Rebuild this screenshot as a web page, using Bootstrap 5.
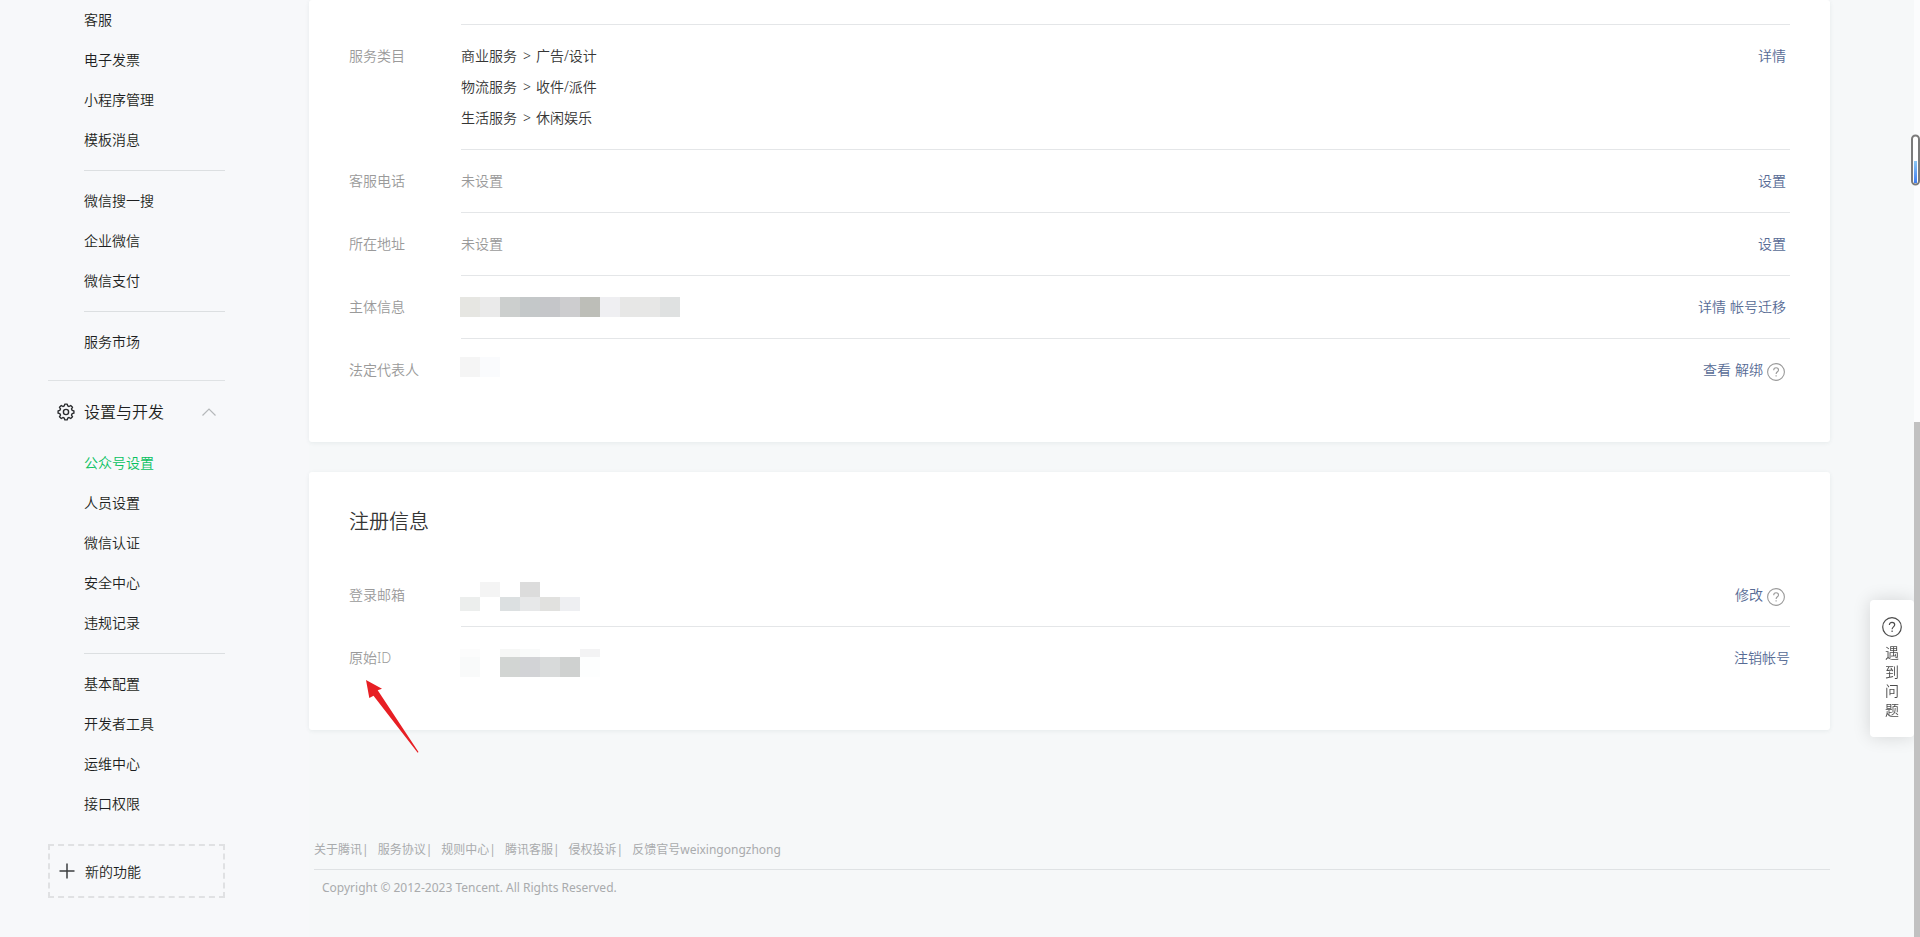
<!DOCTYPE html>
<html lang="zh-CN">
<head>
<meta charset="utf-8">
<meta name="viewport" content="width=device-width, initial-scale=1">
<title>公众号设置</title>
<link href="https://cdn.jsdelivr.net/npm/bootstrap@5.3.0/dist/css/bootstrap.min.css" rel="stylesheet">
<style>
  body { background: #f6f8f9; color: #353535; font: 350 14px/31px "Noto Sans", "Noto Sans CJK SC", sans-serif; overflow: hidden; }
  a { text-decoration: none; }
  button { font-weight: inherit; }
  .side { width: 309px; padding-left: 48px; padding-right: 84px; background: #f7f8fa; }
  .side .nav-link { color: #1d1f21; padding: 0; line-height: 40px; font-weight: inherit; }
  .side .nav-link.active { color: #07c160; }
  .side hr { margin: 10px 0; border-color: #dcdfe1; opacity: 1; }
  .side-list { padding-left: 36px; }
  .side-head { height: 63px; margin-top: 18px; border: 0; border-top: 1px solid #dfe2e4; background: none; color: #1d1f21; font-size: 16px; padding: 0 9px 0 8px; }
  .side-new { height: 54px; margin-top: 20px; border: 2px dashed #e0e1e3; background: none; color: #1d1f21; padding: 0 9px; gap: 10px; }
  .content { padding-right: 90px; }
  .panel { background: #fff; padding: 0 40px 40px; border-radius: 3px; box-shadow: 0 1px 4px rgba(40, 80, 80, .08); margin-bottom: 30px; }
  .panel h2 { font-size: 20px; line-height: 28px; font-weight: inherit; padding-top: 36px; margin: 0 0 28px; color: #353535; }
  .cut-row { height: 25px; }
  .cut-row, .info-main { border-bottom: 1px solid #e4e6e8; }
  .cut-row { margin-left: 112px; }
  .info-label { width: 112px; padding-top: 15px; color: #9a9a9a; font-weight: inherit; }
  .info-main { padding: 15px 0 16px; }
  .info-row:last-child .info-main { border-color: transparent; }
  .info-main dd { color: #353535; }
  .info-main .unset { color: #9a9a9a; }
  .info-main .sep { margin: 0 5px 0 6px; }
  .ops { color: #576b95; padding-right: 4px; gap: 4px; }
  .ops.flush { padding-right: 0; }
  .ops a { color: #576b95; }
  .tip { border: 0; padding: 0; background: none; color: #9a9a9a; line-height: 1; margin: 4px 1px 0 0; }
  .mosaic { overflow: visible; }
  .arrow-mark { left: 17px; top: 53px; }
  .foot { margin-left: 5px; margin-top: 104px; color: #a9abad; font-size: 12px; line-height: 32px; font-weight: 400; }
  .foot a { color: #a9abad; }
  .foot-links { border-bottom: 1px solid #dfe2e4; padding-bottom: 3px; gap: 9px; }
  .foot-links li:not(:last-child)::after { content: "|"; }
  .foot p { padding: 2px 8px; }
  .help { right: 6px; top: 600px; width: 44px; height: 137px; padding: 17px 15px 0; border: 0; border-radius: 4px; background: #fff; color: #4c4c4c; line-height: 19px; box-shadow: 0 0 18px rgba(0, 0, 0, .14); }
  .help svg { margin: 0 -3px 6px; }
  .track { top: 0; right: 0; width: 6px; height: 100%; background: #fbfcfd; padding-top: 422px; }
  .track div { background: #c1c1c1; height: 100%; }
  .gauge { top: 134px; right: 0; }
</style>
</head>
<body>
<div class="d-flex">
  <aside class="side flex-shrink-0 min-vh-100">
    <nav class="nav flex-column flex-nowrap side-list">
      <a class="nav-link" href="#">客服</a>
      <a class="nav-link" href="#">电子发票</a>
      <a class="nav-link" href="#">小程序管理</a>
      <a class="nav-link" href="#">模板消息</a>
      <hr>
      <a class="nav-link" href="#">微信搜一搜</a>
      <a class="nav-link" href="#">企业微信</a>
      <a class="nav-link" href="#">微信支付</a>
      <hr>
      <a class="nav-link" href="#">服务市场</a>
    </nav>
    <button type="button" class="side-head d-flex align-items-center w-100">
      <svg class="me-2" width="20" height="20" viewBox="-10 -10 20 20" fill="none" stroke="#2b2d2f" stroke-width="1.4" stroke-linejoin="round" aria-hidden="true">
        <path d="M7.900 1.200L6.100 1.700 5.500 3.100 6.500 4.700 4.700 6.500 3.100 5.500 1.700 6.100 1.200 7.900H-1.200L-1.700 6.100-3.100 5.500-4.700 6.500-6.500 4.700-5.500 3.100-6.100 1.700-7.900 1.200V-1.200L-6.100-1.700-5.500-3.100-6.500-4.700-4.700-6.500-3.100-5.500-1.700-6.100-1.200-7.900H1.200L1.700-6.100 3.100-5.500 4.700-6.500 6.500-4.700 5.500-3.100 6.100-1.700 7.900-1.200z"/>
        <circle r="2.600"/>
      </svg>
      <span>设置与开发</span>
      <svg class="ms-auto" width="14" height="9" viewBox="0 0 14 9" fill="none" stroke="#b5b8ba" stroke-width="1.200" aria-hidden="true"><path d="M.5 7.500L7 1l6.500 6.500"/></svg>
    </button>
    <nav class="nav flex-column flex-nowrap side-list">
      <a class="nav-link active" href="#">公众号设置</a>
      <a class="nav-link" href="#">人员设置</a>
      <a class="nav-link" href="#">微信认证</a>
      <a class="nav-link" href="#">安全中心</a>
      <a class="nav-link" href="#">违规记录</a>
      <hr>
      <a class="nav-link" href="#">基本配置</a>
      <a class="nav-link" href="#">开发者工具</a>
      <a class="nav-link" href="#">运维中心</a>
      <a class="nav-link" href="#">接口权限</a>
    </nav>
    <button type="button" class="side-new d-flex align-items-center w-100">
      <svg width="16" height="16" viewBox="0 0 16 16" stroke="#3c3e40" stroke-width="1.500" aria-hidden="true"><path d="M8 .5v15M.5 8h15"/></svg>
      <span>新的功能</span>
    </button>
  </aside>

  <main class="content flex-grow-1">
    <section class="panel">
      <div class="cut-row"></div>
      <dl class="m-0">
        <div class="info-row d-flex">
          <dt class="info-label">服务类目</dt>
          <div class="info-main flex-grow-1 d-flex">
            <dd class="m-0 flex-grow-1">商业服务<span class="sep">&gt;</span>广告/设计<br>物流服务<span class="sep">&gt;</span>收件/派件<br>生活服务<span class="sep">&gt;</span>休闲娱乐</dd>
            <div class="ops"><a href="#">详情</a></div>
          </div>
        </div>
        <div class="info-row d-flex">
          <dt class="info-label">客服电话</dt>
          <div class="info-main flex-grow-1 d-flex">
            <dd class="m-0 flex-grow-1 unset">未设置</dd>
            <div class="ops"><a href="#">设置</a></div>
          </div>
        </div>
        <div class="info-row d-flex">
          <dt class="info-label">所在地址</dt>
          <div class="info-main flex-grow-1 d-flex">
            <dd class="m-0 flex-grow-1 unset">未设置</dd>
            <div class="ops"><a href="#">设置</a></div>
          </div>
        </div>
        <div class="info-row d-flex">
          <dt class="info-label">主体信息</dt>
          <div class="info-main flex-grow-1 d-flex">
            <dd class="m-0 flex-grow-1">
              <svg class="mosaic d-block" width="220" height="31" viewBox="1 -1 220 31" shape-rendering="crispEdges" aria-hidden="true">
                <path fill="#e6e6e2" d="M0 5h20v20H0z"/><path fill="#eaeaea" d="M20 5h20v20H20z"/><path fill="#cccfce" d="M40 5h20v20H40z"/><path fill="#c4c8c9" d="M60 5h20v20H60z"/><path fill="#c5c6c9" d="M80 5h20v20H80z"/><path fill="#cdcdcf" d="M100 5h20v20h-20z"/><path fill="#bdbeb8" d="M120 5h20v20h-20z"/><path fill="#efeff2" d="M140 5h20v20h-20z"/><path fill="#e7e7e6" d="M160 5h40v20h-40z"/><path fill="#dfe1e1" d="M200 5h20v20h-20z"/>
              </svg>
            </dd>
            <div class="ops d-flex"><a href="#">详情</a><a href="#">帐号迁移</a></div>
          </div>
        </div>
        <div class="info-row d-flex">
          <dt class="info-label">法定代表人</dt>
          <div class="info-main flex-grow-1 d-flex">
            <dd class="m-0 flex-grow-1">
              <svg class="mosaic d-block" width="40" height="31" viewBox="1 -1 40 31" shape-rendering="crispEdges" aria-hidden="true"><path fill="#f5f5f5" d="M0 2h20v20H0z"/><path fill="#fafbfd" d="M20 2h20v20H20z"/></svg>
            </dd>
            <div class="ops d-flex align-items-center"><a href="#">查看</a><a href="#">解绑</a>
              <button type="button" class="tip" aria-label="帮助"><svg class="d-block" width="18" height="18" viewBox="0 0 18 18" fill="none" stroke="currentColor" stroke-width="1.100"><circle cx="9" cy="9" r="8.400"/><path d="M6.700 7.200C6.700 5.700 7.700 4.700 9.100 4.700s2.400.9 2.400 2.200c0 1.900-2.400 1.900-2.400 4.100M9.100 12.200v1.400"/></svg></button>
            </div>
          </div>
        </div>
      </dl>
    </section>

    <section class="panel">
      <h2>注册信息</h2>
      <dl class="m-0">
        <div class="info-row d-flex">
          <dt class="info-label">登录邮箱</dt>
          <div class="info-main flex-grow-1 d-flex">
            <dd class="m-0 flex-grow-1">
              <svg class="mosaic d-block" width="120" height="31" viewBox="1 -1 120 31" shape-rendering="crispEdges" aria-hidden="true">
                <path fill="#f4f4f4" d="M20 2h20v15H20z"/><path fill="#dcdcdc" d="M60 2h20v15H60z"/><path fill="#eceeed" d="M0 17h20v14H0z"/><path fill="#dce0e1" d="M40 17h20v14H40z"/><path fill="#e7e8e9" d="M60 17h20v14H60z"/><path fill="#e1e1df" d="M80 17h20v14H80z"/><path fill="#eeeff2" d="M100 17h20v14h-20z"/>
              </svg>
            </dd>
            <div class="ops d-flex align-items-center"><a href="#">修改</a>
              <button type="button" class="tip" aria-label="帮助"><svg class="d-block" width="18" height="18" viewBox="0 0 18 18" fill="none" stroke="currentColor" stroke-width="1.100"><circle cx="9" cy="9" r="8.400"/><path d="M6.700 7.200C6.700 5.700 7.700 4.700 9.100 4.700s2.400.9 2.400 2.200c0 1.900-2.400 1.900-2.400 4.100M9.100 12.200v1.400"/></svg></button>
            </div>
          </div>
        </div>
        <div class="info-row d-flex">
          <dt class="info-label position-relative">原始ID
            <svg class="arrow-mark position-absolute" width="53" height="73" viewBox="0 0 53 73" fill="#e71f24" aria-hidden="true"><path d="M0 0l16 8.700-4.300 1.600L52.500 72l-.8.700L7.500 15.700 3.300 18z"/></svg>
          </dt>
          <div class="info-main flex-grow-1 d-flex">
            <dd class="m-0 flex-grow-1">
              <svg class="mosaic d-block" width="140" height="31" viewBox="1 -1 140 31" shape-rendering="crispEdges" aria-hidden="true">
                <path fill="#fcfcfc" d="M0 6h20v8H0z"/><path fill="#f9fafa" d="M0 14h20v20H0z"/><path fill="#f6f7f6" d="M40 6h20v8H40z"/><path fill="#f9fafa" d="M60 6h20v8H60z"/><path fill="#f3f3f4" d="M120 6h20v8h-20z"/><path fill="#d2d5d3" d="M40 14h20v20H40z"/><path fill="#d2d3d6" d="M60 14h20v20H60z"/><path fill="#d8dada" d="M80 14h20v20H80z"/><path fill="#cfd1d0" d="M100 14h20v20h-20z"/><path fill="#fdfefe" d="M120 14h20v20h-20z"/>
              </svg>
            </dd>
            <div class="ops flush"><a href="#">注销帐号</a></div>
          </div>
        </div>
      </dl>
    </section>

    <footer class="foot">
      <ul class="foot-links list-unstyled d-flex m-0">
        <li><a href="#">关于腾讯</a></li>
        <li><a href="#">服务协议</a></li>
        <li><a href="#">规则中心</a></li>
        <li><a href="#">腾讯客服</a></li>
        <li><a href="#">侵权投诉</a></li>
        <li><a href="#">反馈官号weixingongzhong</a></li>
      </ul>
      <p class="m-0">Copyright © 2012-2023 Tencent. All Rights Reserved.</p>
    </footer>
  </main>
</div>

<button type="button" class="help position-fixed d-flex flex-column align-items-center">
  <svg class="flex-shrink-0" width="20" height="20" viewBox="0 0 20 20" fill="none" stroke="currentColor" stroke-width="1.200" aria-hidden="true"><circle cx="10" cy="10" r="9.300"/><path d="M7.400 8c0-1.600 1-2.700 2.600-2.700s2.700 1 2.700 2.400c0 2.100-2.600 2.200-2.600 4.500M10.100 13.500v1.500"/></svg>
  <span>遇到问题</span>
</button>
<div class="track position-fixed" aria-hidden="true"><div></div></div>
<svg class="gauge position-fixed" width="9" height="52" viewBox="0 0 9 52" aria-hidden="true">
  <defs><linearGradient id="level" x1="0" y1="0" x2="0" y2="1"><stop offset="0" stop-color="#8cc8f4"/><stop offset="1" stop-color="#3f7df0"/></linearGradient></defs>
  <rect x="1" y="1.500" width="7" height="49" rx="3.500" fill="#fff" stroke="#7b7b7b" stroke-width="2"/>
  <path fill="url(#level)" d="M3 27h3v22H3z"/>
</svg>
<script src="https://cdn.jsdelivr.net/npm/bootstrap@5.3.0/dist/js/bootstrap.bundle.min.js"></script>
</body>
</html>
